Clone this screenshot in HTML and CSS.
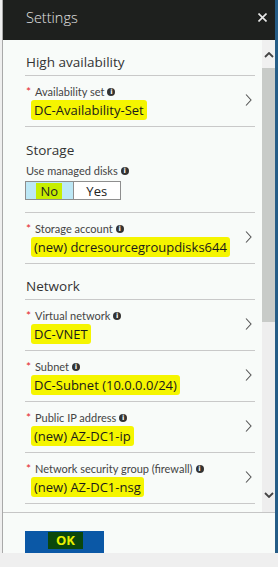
FILE: index.html
```html
<!DOCTYPE html>
<html lang="en">
<head>
  <meta charset="UTF-8">
  <meta name="viewport" content="width=device-width, initial-scale=1.0">
  <title>Settings</title>
  <link rel="stylesheet" href="styles.css">
</head>
<body>
  <div class="window">
    <div class="titlebar">
      <span class="title">Settings</span>
      <svg class="close" width="9" height="9" viewBox="0 0 9 9"><path d="M0.5 0.5 L8.5 8.5 M8.5 0.5 L0.5 8.5" stroke="#e8e8e8" stroke-width="1.6"/></svg>
    </div>

    <div class="main">
      <div class="content">

        <div class="section-title">High availability</div>
        <div class="item">
          <div class="item-text">
            <div class="label"><span class="req">*</span>Availability set <span class="info">i</span></div>
            <div class="value"><span class="mark">DC-Availability-Set</span></div>
          </div>
          <svg class="chev" width="7" height="12" viewBox="0 0 7 12"><path d="M1 0.5 L6 6 L1 11.5" stroke="#555" stroke-width="1.1" fill="none"/></svg>
        </div>

        <div class="group">
          <div class="section-title plain">Storage</div>
          <div class="label plain-label">Use managed disks <span class="info">i</span></div>
          <div class="toggle">
            <div class="seg on"><span class="mark-green">No</span></div>
            <div class="seg">Yes</div>
          </div>
        </div>
        <div class="item">
          <div class="item-text">
            <div class="label"><span class="req">*</span>Storage account <span class="info">i</span></div>
            <div class="value"><span class="mark">(new) dcresourcegroupdisks644</span></div>
          </div>
          <svg class="chev" width="7" height="12" viewBox="0 0 7 12"><path d="M1 0.5 L6 6 L1 11.5" stroke="#555" stroke-width="1.1" fill="none"/></svg>
        </div>

        <div class="section-title">Network</div>
        <div class="item">
          <div class="item-text">
            <div class="label"><span class="req">*</span>Virtual network <span class="info">i</span></div>
            <div class="value"><span class="mark">DC-VNET</span></div>
          </div>
          <svg class="chev" width="7" height="12" viewBox="0 0 7 12"><path d="M1 0.5 L6 6 L1 11.5" stroke="#555" stroke-width="1.1" fill="none"/></svg>
        </div>
        <div class="item">
          <div class="item-text">
            <div class="label"><span class="req">*</span>Subnet <span class="info">i</span></div>
            <div class="value"><span class="mark">DC-Subnet (10.0.0.0/24)</span></div>
          </div>
          <svg class="chev" width="7" height="12" viewBox="0 0 7 12"><path d="M1 0.5 L6 6 L1 11.5" stroke="#555" stroke-width="1.1" fill="none"/></svg>
        </div>
        <div class="item">
          <div class="item-text">
            <div class="label"><span class="req">*</span>Public IP address <span class="info">i</span></div>
            <div class="value"><span class="mark">(new) AZ-DC1-ip</span></div>
          </div>
          <svg class="chev" width="7" height="12" viewBox="0 0 7 12"><path d="M1 0.5 L6 6 L1 11.5" stroke="#555" stroke-width="1.1" fill="none"/></svg>
        </div>
        <div class="item">
          <div class="item-text">
            <div class="label"><span class="req">*</span>Network security group (firewall) <span class="info">i</span></div>
            <div class="value"><span class="mark">(new) AZ-DC1-nsg</span></div>
          </div>
          <svg class="chev" width="7" height="12" viewBox="0 0 7 12"><path d="M1 0.5 L6 6 L1 11.5" stroke="#555" stroke-width="1.1" fill="none"/></svg>
        </div>

      </div>
      <div class="scrollbar">
        <div class="sb-up">
          <svg width="10" height="6" viewBox="0 0 10 6"><path d="M1 5 L5 1 L9 5" stroke="#444" stroke-width="1.8" fill="none"/></svg>
        </div>
        <div class="sb-thumb"></div>
        <div class="sb-track">
          <svg width="10" height="6" viewBox="0 0 10 6"><path d="M1 1 L5 5 L9 1" stroke="#444" stroke-width="1.8" fill="none"/></svg>
        </div>
      </div>
    </div>

    <div class="footer">
      <button class="ok"><span class="mark-dark">OK</span></button>
    </div>
  </div>
  <div class="taskbar"></div>
</body>
</html>
```

FILE: styles.css
```css
body {
  margin: 0;
  background: #efefef;
  font-family: "Open Sans", "Noto Sans", sans-serif;
  color: #222;
}
.window {
  height: 553px;
  margin-left: 2px;
  border-left: 1px solid #a9a9a9;
  border-right: 3px solid #255d87;
  background: #f8fbf9;
  display: flex;
  flex-direction: column;
  overflow: hidden;
}
.titlebar {
  height: 40px;
  flex: none;
  box-sizing: border-box;
  background: #1e201e;
  display: flex;
  align-items: center;
  justify-content: space-between;
  padding: 0 8px 6px 23px;
  color: #e4e4e4;
}
.title {
  font-size: 14.5px;
  font-weight: 300;
}
.main {
  height: 472px;
  flex: none;
  display: flex;
  overflow: hidden;
}
.content {
  flex: 1;
  padding: 0 7px 0 22px;
}
.section-title {
  font-size: 13.5px;
  line-height: 20px;
  color: #333;
  padding: 12px 0 3px 1px;
  border-bottom: 1px solid #c9c9c9;
}
.section-title.plain {
  padding: 13px 0 0 1px;
  border-bottom: none;
}
.group {
  padding-bottom: 12px;
  border-bottom: 1px solid #c9c9c9;
}
.item {
  display: flex;
  align-items: center;
  padding: 8px 0 6px;
  border-bottom: 1px solid #c9c9c9;
}
.item-text {
  flex: 1;
}
.label {
  font-family: Lato, "Open Sans", sans-serif;
  font-size: 11px;
  line-height: 16px;
  color: #444;
  display: flex;
  align-items: center;
}
.plain-label {
  margin-top: 3px;
  padding-left: 1px;
}
.req {
  color: #e5262b;
  width: 10px;
  padding-left: 1px;
  box-sizing: border-box;
  font-size: 12px;
}
.info {
  display: inline-flex;
  align-items: center;
  justify-content: center;
  width: 8px;
  height: 8px;
  margin-left: 3px;
  border-radius: 50%;
  background: #333;
  color: #fff;
  font-size: 7px;
  font-weight: bold;
  line-height: 1;
  font-family: "DejaVu Sans", sans-serif;
}
.value {
  font-size: 13px;
  line-height: 20px;
  padding-left: 9px;
  color: #1a1a1a;
}
.mark {
  background: #f5f500;
  padding: 1px 3px;
  margin-left: -3px;
  border-radius: 3px;
}
.chev {
  margin: -4px 3px 0 0;
}
.toggle {
  display: flex;
  width: 96px;
  height: 19px;
  margin-top: 2px;
  box-sizing: border-box;
  border: 1px solid #8e8e8e;
  font-size: 13px;
}
.seg {
  flex: 1;
  display: flex;
  align-items: center;
  justify-content: center;
  background: #fff;
  color: #222;
}
.seg.on {
  background: #bde8f6;
  border-right: 1px solid #8e8e8e;
}
.mark-green {
  background: #c6ee00;
  padding: 0 4px;
  line-height: 16px;
}
.scrollbar {
  width: 13px;
  display: flex;
  flex-direction: column;
}
.sb-up {
  height: 28px;
  background: #f0f0f0;
  display: flex;
  align-items: center;
  justify-content: center;
  padding-top: 2px;
  box-sizing: border-box;
}
.sb-thumb {
  height: 254px;
  background: #c8cbc8;
}
.sb-track {
  flex: 1;
  background: #eeeeee;
  display: flex;
  align-items: flex-end;
  justify-content: center;
  padding-bottom: 14px;
}
.footer {
  flex: 1;
  border-top: 1px solid #c6c6c6;
  padding: 18px 0 0 22px;
}
.ok {
  width: 79px;
  height: 28px;
  border: none;
  padding: 1px 0 0;
  background: #0b58a6;
  display: flex;
  justify-content: center;
  align-items: flex-start;
  font-family: inherit;
}
.mark-dark {
  background: #0b470d;
  color: #e8f000;
  font-size: 13px;
  font-weight: bold;
  line-height: 17px;
  padding: 0 8px;
  margin-left: 2px;
}
.taskbar {
  height: 14px;
  background: #efefef;
}
```
